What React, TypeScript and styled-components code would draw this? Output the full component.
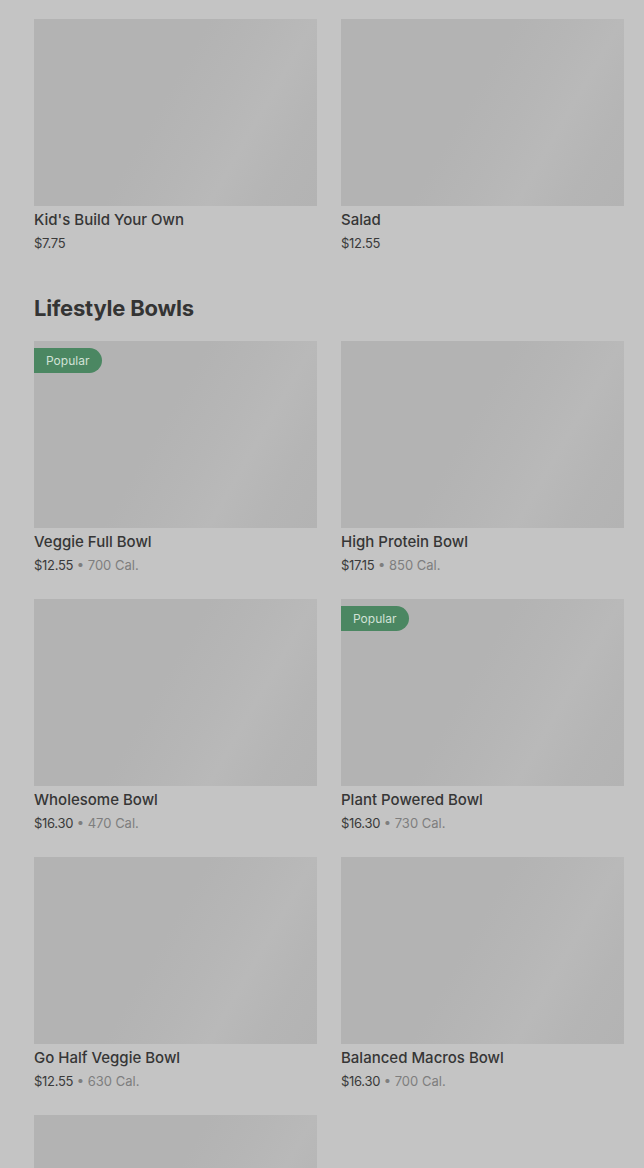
import React from "react";
import styled, { createGlobalStyle } from "styled-components";

const Global = createGlobalStyle`
  html, body {
    margin: 0;
    padding: 0;
    background: #c4c4c4;
  }
  body {
    font-family: Inter, "Noto Sans", "Liberation Sans", sans-serif;
    color: #333333;
  }
`;

const Page = styled.div`
  height: 1168px;
  padding: 19px 20px 0 34px;
  box-sizing: border-box;
  background: #c4c4c4;
  overflow: hidden;
`;

const Section = styled.section`
  display: flex;
  flex-direction: column;
`;

const Heading = styled.h2`
  margin: 21px 0 19px;
  font-size: 22px;
  line-height: 28px;
  font-weight: 700;
  color: #343434;
  letter-spacing: -0.2px;
`;

const Grid = styled.div`
  display: grid;
  grid-template-columns: 283px 283px;
  column-gap: 24px;
  row-gap: 4px;
`;

const Card = styled.div`
  display: flex;
  flex-direction: column;
  padding-bottom: 19px;
`;

const Image = styled.div`
  position: relative;
  height: 187px;
  background: linear-gradient(
    120deg,
    #b3b3b3 0%,
    #b3b3b3 45%,
    #b6b6b6 60%,
    #b9b9b9 72%,
    #b5b5b5 85%,
    #b3b3b3 100%
  );
`;

const Badge = styled.span`
  position: absolute;
  top: 7px;
  left: 0;
  height: 25px;
  padding: 0 13px 0 12px;
  display: flex;
  align-items: center;
  background: #4b8762;
  color: #d2e2d7;
  font-size: 12px;
  border-radius: 0 13px 13px 0;
`;

const Title = styled.div`
  margin-top: 2px;
  font-size: 15px;
  line-height: 24px;
  font-weight: 500;
  color: #363636;
`;

const Meta = styled.div`
  font-size: 13px;
  line-height: 22px;
  color: #3a3a3a;
  letter-spacing: -0.3px;
`;

const Cal = styled.span`
  color: #7e7e7e;
  letter-spacing: 0;
`;

type Item = { id: string; name?: string; price?: string; cal?: string; popular?: boolean };

const top: Item[] = [
  { id: "kids", name: "Kid's Build Your Own", price: "$7.75" },
  { id: "salad", name: "Salad", price: "$12.55" },
];

const bowls: Item[] = [
  { id: "veggie", name: "Veggie Full Bowl", price: "$12.55", cal: "700 Cal.", popular: true },
  { id: "protein", name: "High Protein Bowl", price: "$17.15", cal: "850 Cal." },
  { id: "wholesome", name: "Wholesome Bowl", price: "$16.30", cal: "470 Cal." },
  { id: "plant", name: "Plant Powered Bowl", price: "$16.30", cal: "730 Cal.", popular: true },
  { id: "half", name: "Go Half Veggie Bowl", price: "$12.55", cal: "630 Cal." },
  { id: "macros", name: "Balanced Macros Bowl", price: "$16.30", cal: "700 Cal." },
  { id: "loading" },
];

function MenuCard({ item }: { item: Item }) {
  return (
    <Card>
      <Image>{item.popular && <Badge>Popular</Badge>}</Image>
      {item.name && <Title>{item.name}</Title>}
      {item.price && (
        <Meta>
          {item.price}
          {item.cal && <Cal> • {item.cal}</Cal>}
        </Meta>
      )}
    </Card>
  );
}

export default function App() {
  return (
    <>
      <Global />
      <Page>
        <Section>
          <Grid>
            {top.map((i) => (
              <MenuCard key={i.id} item={i} />
            ))}
          </Grid>
        </Section>
        <Section>
          <Heading>Lifestyle Bowls</Heading>
          <Grid>
            {bowls.map((i) => (
              <MenuCard key={i.id} item={i} />
            ))}
          </Grid>
        </Section>
      </Page>
    </>
  );
}
